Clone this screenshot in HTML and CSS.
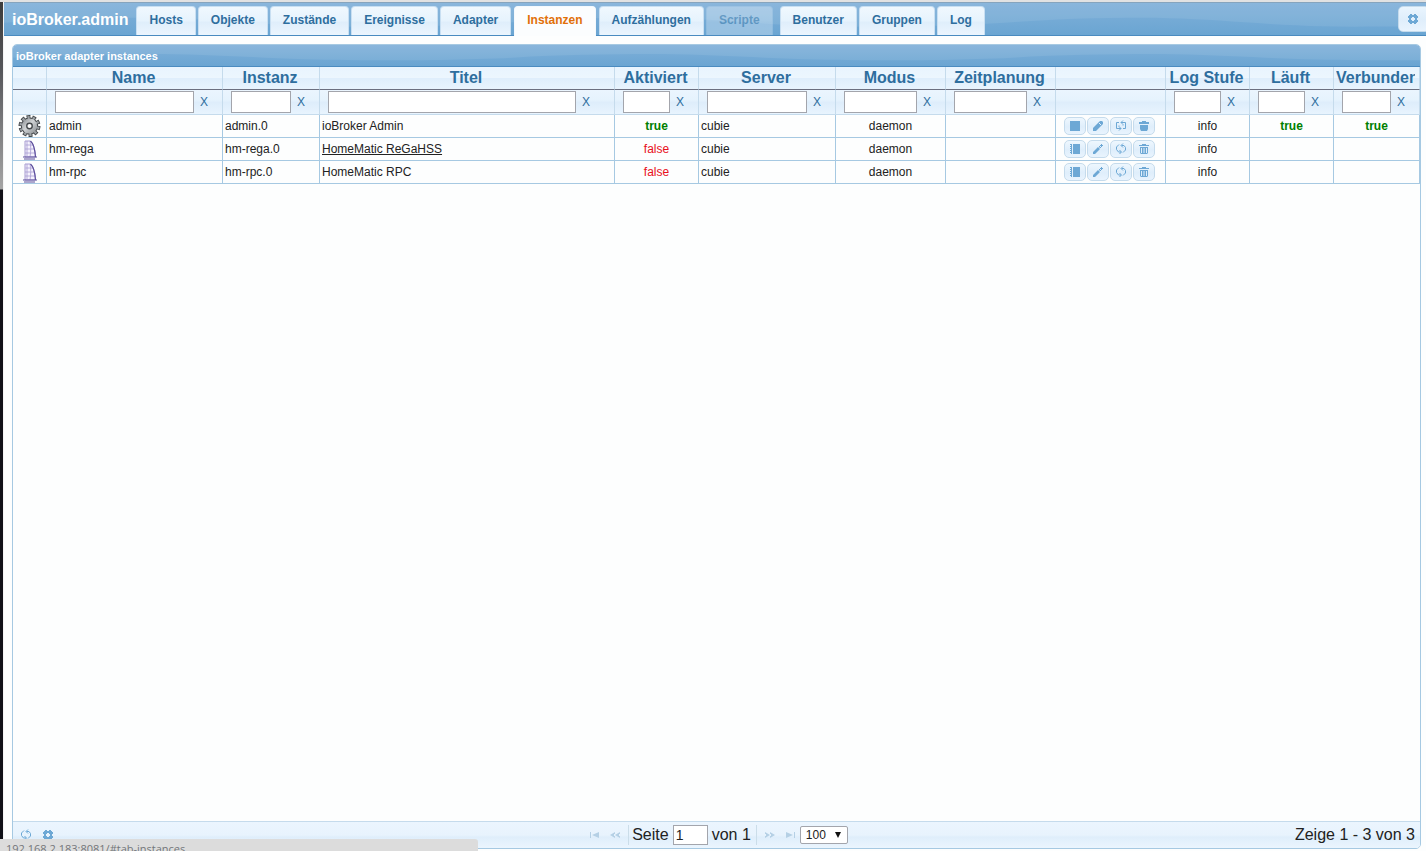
FILE: index.html
```html
<!DOCTYPE html>
<html lang="de">
<head>
<meta charset="utf-8">
<title>ioBroker.admin</title>
<link rel="stylesheet" href="styles.css">
</head>
<body>
<svg class="sprite" aria-hidden="true">
  <symbol id="gear" viewBox="0 0 10 10"><path fill-rule="evenodd" d="M1 1h1V0h2v1h2V0h2v1h1v1h1v2H9v2h1v2H9v1H8v1H6V9H4v1H2V9H1V8H0V6h1V4H0V2h1zM4 3v1H3v2h1v1h2V6h1V4H6V3z"/></symbol>
  <symbol id="refresh" viewBox="0 0 12 12"><path fill="none" stroke="currentColor" d="M4 1.500 1.500 4v2.500L3.500 9H6M6.500 2.500H9l1.500 2v2.500L8 9.500M8 .5l-2 2 2 2M4.500 7l2 2-2 2"/></symbol>
  <symbol id="refresh-square" viewBox="0 0 12 12"><path fill="none" stroke="currentColor" d="M4 2.500H1.500v6H6M6 2.500h4.500v6H8M8 .5l-2 2 2 2v1M4 5.500v1l2 2-2 2"/></symbol>
  <symbol id="stop" viewBox="0 0 12 12"><path d="M1 1h10v10H1z"/></symbol>
  <symbol id="book" viewBox="0 0 12 12"><path d="M4 1h7v10H4zM1 1h2v1H1zM1 3h2v1H1zM1 5h2v1H1zM1 7h2v1H1zM1 9h2v1H1zM2 2h1v9H2z"/></symbol>
  <symbol id="pencil-solid" viewBox="0 0 12 12"><path d="M8 1h2l1 1v2L5 10l-1 1H1V8z"/><path d="M7 3l2 2" stroke="#e4f1fd" fill="none"/></symbol>
  <symbol id="pencil" viewBox="0 0 12 12"><path d="M1 11V9l5-5 2 2-5 5zM7 3h1v1h1v1H8L7 4zM9 1h1v1h1v1h-1v1H9V3H8V2h1z"/></symbol>
  <symbol id="bin-solid" viewBox="0 0 12 12"><path d="M4 1h4v1h3v2H1V2h3zM2 5h8v4l-1 2H3L2 9z"/></symbol>
  <symbol id="bin" viewBox="0 0 12 12"><path fill-rule="evenodd" d="M4 1h4v1h3v1H1V2h3zM2 4h8v6l-1 1H3l-1-1zM3 5v5h1V5zM5 5v5h2V5zM8 5v5h1V5z"/><path d="M5.500 5h1v5h-1z"/></symbol>
  <symbol id="first" viewBox="0 0 12 8"><path d="M1 1h1v6H1zM10 1v6L3 4z"/></symbol>
  <symbol id="prev" viewBox="0 0 12 8"><path d="M6 1v2H5v2h1v2L1 4zM11 1v2h-1v2h1v2L6 4z"/></symbol>
  <symbol id="cog" viewBox="0 0 24 24">
    <g fill="none">
      <circle cx="12" cy="12" r="10" pathLength="100" stroke="#44484b" stroke-width="4" stroke-dasharray="6.500 3.500"/>
      <circle cx="12" cy="12" r="8.500" fill="#b4b9bc" stroke="#44484b" stroke-width="2"/>
      <circle cx="12" cy="12" r="9" pathLength="100" stroke="#9ba0a4" stroke-width="4" stroke-dasharray="4 6" stroke-dashoffset="-1.250"/>
    </g>
    <circle cx="12" cy="12" r="8.300" fill="url(#steel)"/>
    <circle cx="12" cy="12" r="3" fill="#fff" stroke="#44484b" stroke-width="1.500"/>
  </symbol>
  <symbol id="sail" viewBox="0 0 16 20">
    <path fill="#f5f2fd" stroke="#a79cd2" d="M3 1h5c4 3 5 9 5.500 16H3z"/>
    <path fill="none" stroke="#a79cd2" stroke-width=".8" d="M3.500 5h8M3 9h10M3 13h10.500M8 1c1 5 1 10 0 16M5 1v15"/>
    <path fill="none" stroke="#5d4f9c" stroke-width="1.200" d="M8.500 1c3.500 3 4.500 9 5 16M1 17h14M2 19h11"/>
  </symbol>
  <linearGradient id="steel" x2="1" y2="1"><stop stop-color="#85898d"/><stop offset=".45" stop-color="#d0d3d5"/><stop offset="1" stop-color="#85898d"/></linearGradient>
</svg>

<header class="topbar gloss">
  <h1 class="brand">ioBroker.admin</h1>
  <nav class="tabs">
    <a class="tab" href="#tab-hosts">Hosts</a>
    <a class="tab" href="#tab-objects">Objekte</a>
    <a class="tab" href="#tab-states">Zustände</a>
    <a class="tab" href="#tab-events">Ereignisse</a>
    <a class="tab" href="#tab-adapters">Adapter</a>
    <a class="tab active" href="#tab-instances">Instanzen</a>
    <a class="tab" href="#tab-enums">Aufzählungen</a>
    <a class="tab disabled" aria-disabled="true">Scripte</a>
    <a class="tab" href="#tab-users">Benutzer</a>
    <a class="tab" href="#tab-groups">Gruppen</a>
    <a class="tab" href="#tab-log">Log</a>
  </nav>
  <button class="settings" aria-label="Einstellungen"><svg><use href="#gear"/></svg></button>
</header>

<main class="panel">
  <h2 class="caption gloss">ioBroker adapter instances</h2>
  <table class="grid">
    <colgroup>
      <col class="c-icon"><col class="c-name"><col class="c-inst"><col class="c-title"><col class="c-small"><col class="c-server"><col class="c-mid"><col class="c-mid"><col class="c-mid"><col class="c-small"><col class="c-small"><col class="c-last">
    </colgroup>
    <thead>
      <tr class="heads">
        <th></th><th><div>Name</div></th><th><div>Instanz</div></th><th><div>Titel</div></th><th><div>Aktiviert</div></th><th><div>Server</div></th><th><div>Modus</div></th><th><div>Zeitplanung</div></th><th></th><th><div>Log Stufe</div></th><th><div>Läuft</div></th><th><div>Verbunden</div></th>
      </tr>
      <tr class="filters">
        <td></td>
        <td><div class="filter"><input aria-label="Name"><button>X</button></div></td>
        <td><div class="filter"><input aria-label="Instanz"><button>X</button></div></td>
        <td><div class="filter wide"><input aria-label="Titel"><button>X</button></div></td>
        <td><div class="filter"><input aria-label="Aktiviert"><button>X</button></div></td>
        <td><div class="filter"><input aria-label="Server"><button>X</button></div></td>
        <td><div class="filter"><input aria-label="Modus"><button>X</button></div></td>
        <td><div class="filter"><input aria-label="Zeitplanung"><button>X</button></div></td>
        <td></td>
        <td><div class="filter"><input aria-label="Log Stufe"><button>X</button></div></td>
        <td><div class="filter"><input aria-label="Läuft"><button>X</button></div></td>
        <td><div class="filter"><input aria-label="Verbunden"><button>X</button></div></td>
      </tr>
    </thead>
    <tbody>
      <tr>
        <td class="icon"><svg class="cog"><use href="#cog"/></svg></td>
        <td>admin</td><td>admin.0</td><td>ioBroker Admin</td><td class="mid yes">true</td><td>cubie</td><td class="mid">daemon</td><td></td>
        <td><div class="actions"><button aria-label="Stopp"><svg><use href="#stop"/></svg></button><button aria-label="Bearbeiten"><svg><use href="#pencil-solid"/></svg></button><button aria-label="Neu starten"><svg><use href="#refresh-square"/></svg></button><button aria-label="Löschen"><svg><use href="#bin-solid"/></svg></button></div></td>
        <td class="mid">info</td><td class="mid yes">true</td><td class="mid yes">true</td>
      </tr>
      <tr>
        <td class="icon"><svg class="sail"><use href="#sail"/></svg></td>
        <td>hm-rega</td><td>hm-rega.0</td><td><a class="link" href="#hm-rega">HomeMatic ReGaHSS</a></td><td class="mid no">false</td><td>cubie</td><td class="mid">daemon</td><td></td>
        <td><div class="actions"><button aria-label="Konfiguration"><svg><use href="#book"/></svg></button><button aria-label="Bearbeiten"><svg><use href="#pencil"/></svg></button><button aria-label="Neu starten"><svg><use href="#refresh"/></svg></button><button aria-label="Löschen"><svg><use href="#bin"/></svg></button></div></td>
        <td class="mid">info</td><td></td><td></td>
      </tr>
      <tr>
        <td class="icon"><svg class="sail"><use href="#sail"/></svg></td>
        <td>hm-rpc</td><td>hm-rpc.0</td><td>HomeMatic RPC</td><td class="mid no">false</td><td>cubie</td><td class="mid">daemon</td><td></td>
        <td><div class="actions"><button aria-label="Konfiguration"><svg><use href="#book"/></svg></button><button aria-label="Bearbeiten"><svg><use href="#pencil"/></svg></button><button aria-label="Neu starten"><svg><use href="#refresh"/></svg></button><button aria-label="Löschen"><svg><use href="#bin"/></svg></button></div></td>
        <td class="mid">info</td><td></td><td></td>
      </tr>
    </tbody>
  </table>
  <footer class="pager">
    <div class="tools">
      <button aria-label="Aktualisieren"><svg><use href="#refresh"/></svg></button>
      <button aria-label="Einstellungen"><svg class="small"><use href="#gear"/></svg></button>
    </div>
    <div class="pages">
      <button disabled aria-label="Erste Seite"><svg><use href="#first"/></svg></button>
      <button disabled aria-label="Vorherige Seite"><svg><use href="#prev"/></svg></button>
      <label class="page">Seite <input value="1"> von 1</label>
      <button disabled aria-label="Nächste Seite"><svg class="flip"><use href="#prev"/></svg></button>
      <button disabled aria-label="Letzte Seite"><svg class="flip"><use href="#first"/></svg></button>
      <span class="size"><select aria-label="Zeilen pro Seite"><option>100</option></select></span>
    </div>
    <div class="info">Zeige 1 - 3 von 3</div>
  </footer>
</main>
<div class="status">192.168.2.183:8081/#tab-instances</div>
</body>
</html>
```
FILE: styles.css
```css
* { box-sizing: border-box; }

body {
  margin: 0;
  min-height: 100vh;
  display: flex;
  flex-direction: column;
  border-top: 2px solid #e2e2e2;
  padding-left: 4px;
  overflow: hidden;
  font: 12px/16px "Liberation Sans", Arial, sans-serif;
  color: #222;
  background:
    linear-gradient(90deg, transparent 3px, #f4f4f4 3px) 0 0 / 4px 100% no-repeat,
    linear-gradient(#3c3c3c, #55565a 70px, #a5a5a5 189px, #111118 190px) 0 0 / 3px 100% no-repeat,
    #fdfefe;
}

button, input, select { font: inherit; color: inherit; margin: 0; }
button { border: 0; padding: 0; background: none; }
svg { display: block; fill: currentColor; }
.sprite { position: absolute; width: 0; height: 0; }

.gloss {
  background:
    url("data:image/svg+xml,%3Csvg xmlns='http://www.w3.org/2000/svg' viewBox='0 0 500 100' preserveAspectRatio='none'%3E%3Cpath fill='%23fff' fill-opacity='.08' d='M0 62C50 50 90 46 140 46C210 46 270 74 350 74C410 74 450 72 500 62V0H0z'/%3E%3C/svg%3E") 0 0 / 500px 100%,
    linear-gradient(#80b0d9, #6aa5d2);
}

.topbar {
  display: flex;
  align-items: flex-end;
  height: 34px;
  border-top: 1px solid #86a4bd;
  border-bottom: 1px solid #4a8bc0;
}
.brand {
  margin: 0;
  padding: 0 8px 5px 8px;
  font-size: 16px;
  line-height: 20px;
  color: #fff;
}
.tabs { display: flex; gap: 2px; height: 29px; }
.tab {
  padding: 5px 12px 0;
  border: 1px solid #c8dff2;
  border-bottom: 0;
  border-radius: 4px 4px 0 0;
  background: linear-gradient(#f0f8fe, #e6f3fd 50%, #dfeefb 54%, #ebf5fe);
  color: #2e6e9e;
  font-weight: bold;
  text-decoration: none;
}
.tab.active {
  margin: 0 1px -1px;
  background: #fbfdfe;
  border-color: #f4f9fd;
  color: #e17009;
}
.tab.disabled { opacity: .35; margin-right: 5px; }
.settings {
  display: flex;
  align-items: center;
  justify-content: center;
  width: 32px;
  height: 26px;
  margin: 0 -4px 3px auto;
  padding-right: 2px;
  border: 1px solid #c5dbec;
  border-radius: 5px;
  background: linear-gradient(#eaf5fe, #dfeefb 50%, #e9f4fe);
  color: #6da8d5;
}
.settings svg { width: 10px; height: 10px; }

.panel {
  flex: 1;
  display: flex;
  flex-direction: column;
  margin: 8px 5px 2px 8px;
  border: 1px solid #a6c9e2;
  border-radius: 5px;
  overflow: hidden;
}
.caption {
  margin: -1px -1px 0;
  padding: 4px 4px 2px;
  border-bottom: 1px solid #4a8bc0;
  font-size: 11px;
  line-height: 16px;
  color: #fff;
}

.grid { width: 100%; table-layout: fixed; border-collapse: separate; border-spacing: 0; }
.c-icon { width: 34px; }
.c-name { width: 176px; }
.c-inst { width: 97px; }
.c-title { width: 295px; }
.c-small { width: 84px; }
.c-server { width: 137px; }
.c-mid { width: 110px; }
.c-last { width: 86px; }
.grid th, .grid td {
  height: 23px;
  padding: 0 2px;
  border-right: 1px solid #a6c9e2;
  border-bottom: 1px solid #a6c9e2;
}
.grid .heads th {
  padding: 0 4px 0 2px;
  border-right-color: #c5dbec;
  border-bottom-color: #6b6f80;
  background: linear-gradient(#e8f4fe, #ecf6fe 48%, #dfeefc 52%, #e8f4fe);
  font-size: 16px;
  line-height: 20px;
  color: #2e6e9e;
}
.heads div { overflow: hidden; white-space: nowrap; display: grid; justify-content: safe center; }
.grid .filters td {
  height: 25px;
  padding: 0;
  border-color: #c5dbec;
  background: linear-gradient(#ebf5fe, #e6f3fd 40%, #deedfb 52%, #e8f4fe);
}
.filter { display: flex; align-items: center; gap: 6px; padding: 0 14px 0 8px; }
.filter.wide { padding-right: 24px; }
.filter input { flex: 1; min-width: 0; height: 22px; border: 1px solid #a3a5ac; background: #fff; }
.filter button { width: 8px; color: #2e6e9e; }
.mid { text-align: center; }
.yes { color: #008000; font-weight: bold; }
.no { color: #e8101c; }
.link { color: inherit; }
.cog { width: 23px; height: 22px; margin: 0 auto; }
.sail { width: 16px; height: 20px; margin: 2px auto 0; }
.grid .icon { padding: 0; }
.actions { display: flex; gap: 1px; padding-left: 6px; }
.actions button {
  display: flex;
  align-items: center;
  justify-content: center;
  width: 22px;
  height: 18px;
  border: 1px solid #c5dbec;
  border-radius: 5px;
  background: linear-gradient(#eef7fe, #dfeefb 55%, #e9f4fe);
  color: #6da8d5;
}
.actions svg, .tools svg { width: 12px; height: 12px; }

.pager {
  display: grid;
  grid-template-columns: 1fr auto 1fr;
  align-items: center;
  height: 27px;
  margin-top: auto;
  border-top: 1px solid #c5dbec;
  background: linear-gradient(#ebf5fe, #e8f3fd 50%, #dfeefb 58%, #ebf5fe);
  font-size: 16px;
  line-height: 20px;
}
.tools { display: flex; align-items: center; gap: 11px; padding-left: 7px; color: #6da8d5; }
.tools .small { width: 10px; height: 10px; }
.pages { display: flex; align-items: center; }
.pages button { display: flex; justify-content: center; width: 20px; color: #b5d0e5; }
.pages svg { width: 12px; height: 8px; }
.flip { transform: scaleX(-1); }
.page {
  display: flex;
  align-items: center;
  gap: 4px;
  margin: 0 3px;
  padding: 0 5px 0 3px;
  border: solid #cbdde9;
  border-width: 0 1px;
}
.page input { width: 35px; height: 20px; padding: 1px 2px; border: 1px solid #a3a5ac; background: #fff; font-size: 14px; }
.size { position: relative; display: flex; }
.size::after {
  content: "";
  position: absolute;
  top: 6px;
  right: 7px;
  border: solid transparent;
  border-width: 6px 3px 0;
  border-top-color: #111;
}
.size select { appearance: none; width: 48px; height: 18px; padding: 0 5px; border: 1px solid #a3a5ac; border-radius: 2px; background: #fff; font-size: 12px; line-height: 16px; }
.info { padding-right: 5px; text-align: right; }

.status {
  position: fixed;
  left: 0;
  bottom: 0;
  width: 478px;
  height: 12px;
  padding: 2px 6px;
  overflow: hidden;
  border-top-right-radius: 3px;
  background: #dcdcdc;
  color: #73767a;
  font: 11px/16px "Open Sans", "Noto Sans", sans-serif;
}
```
